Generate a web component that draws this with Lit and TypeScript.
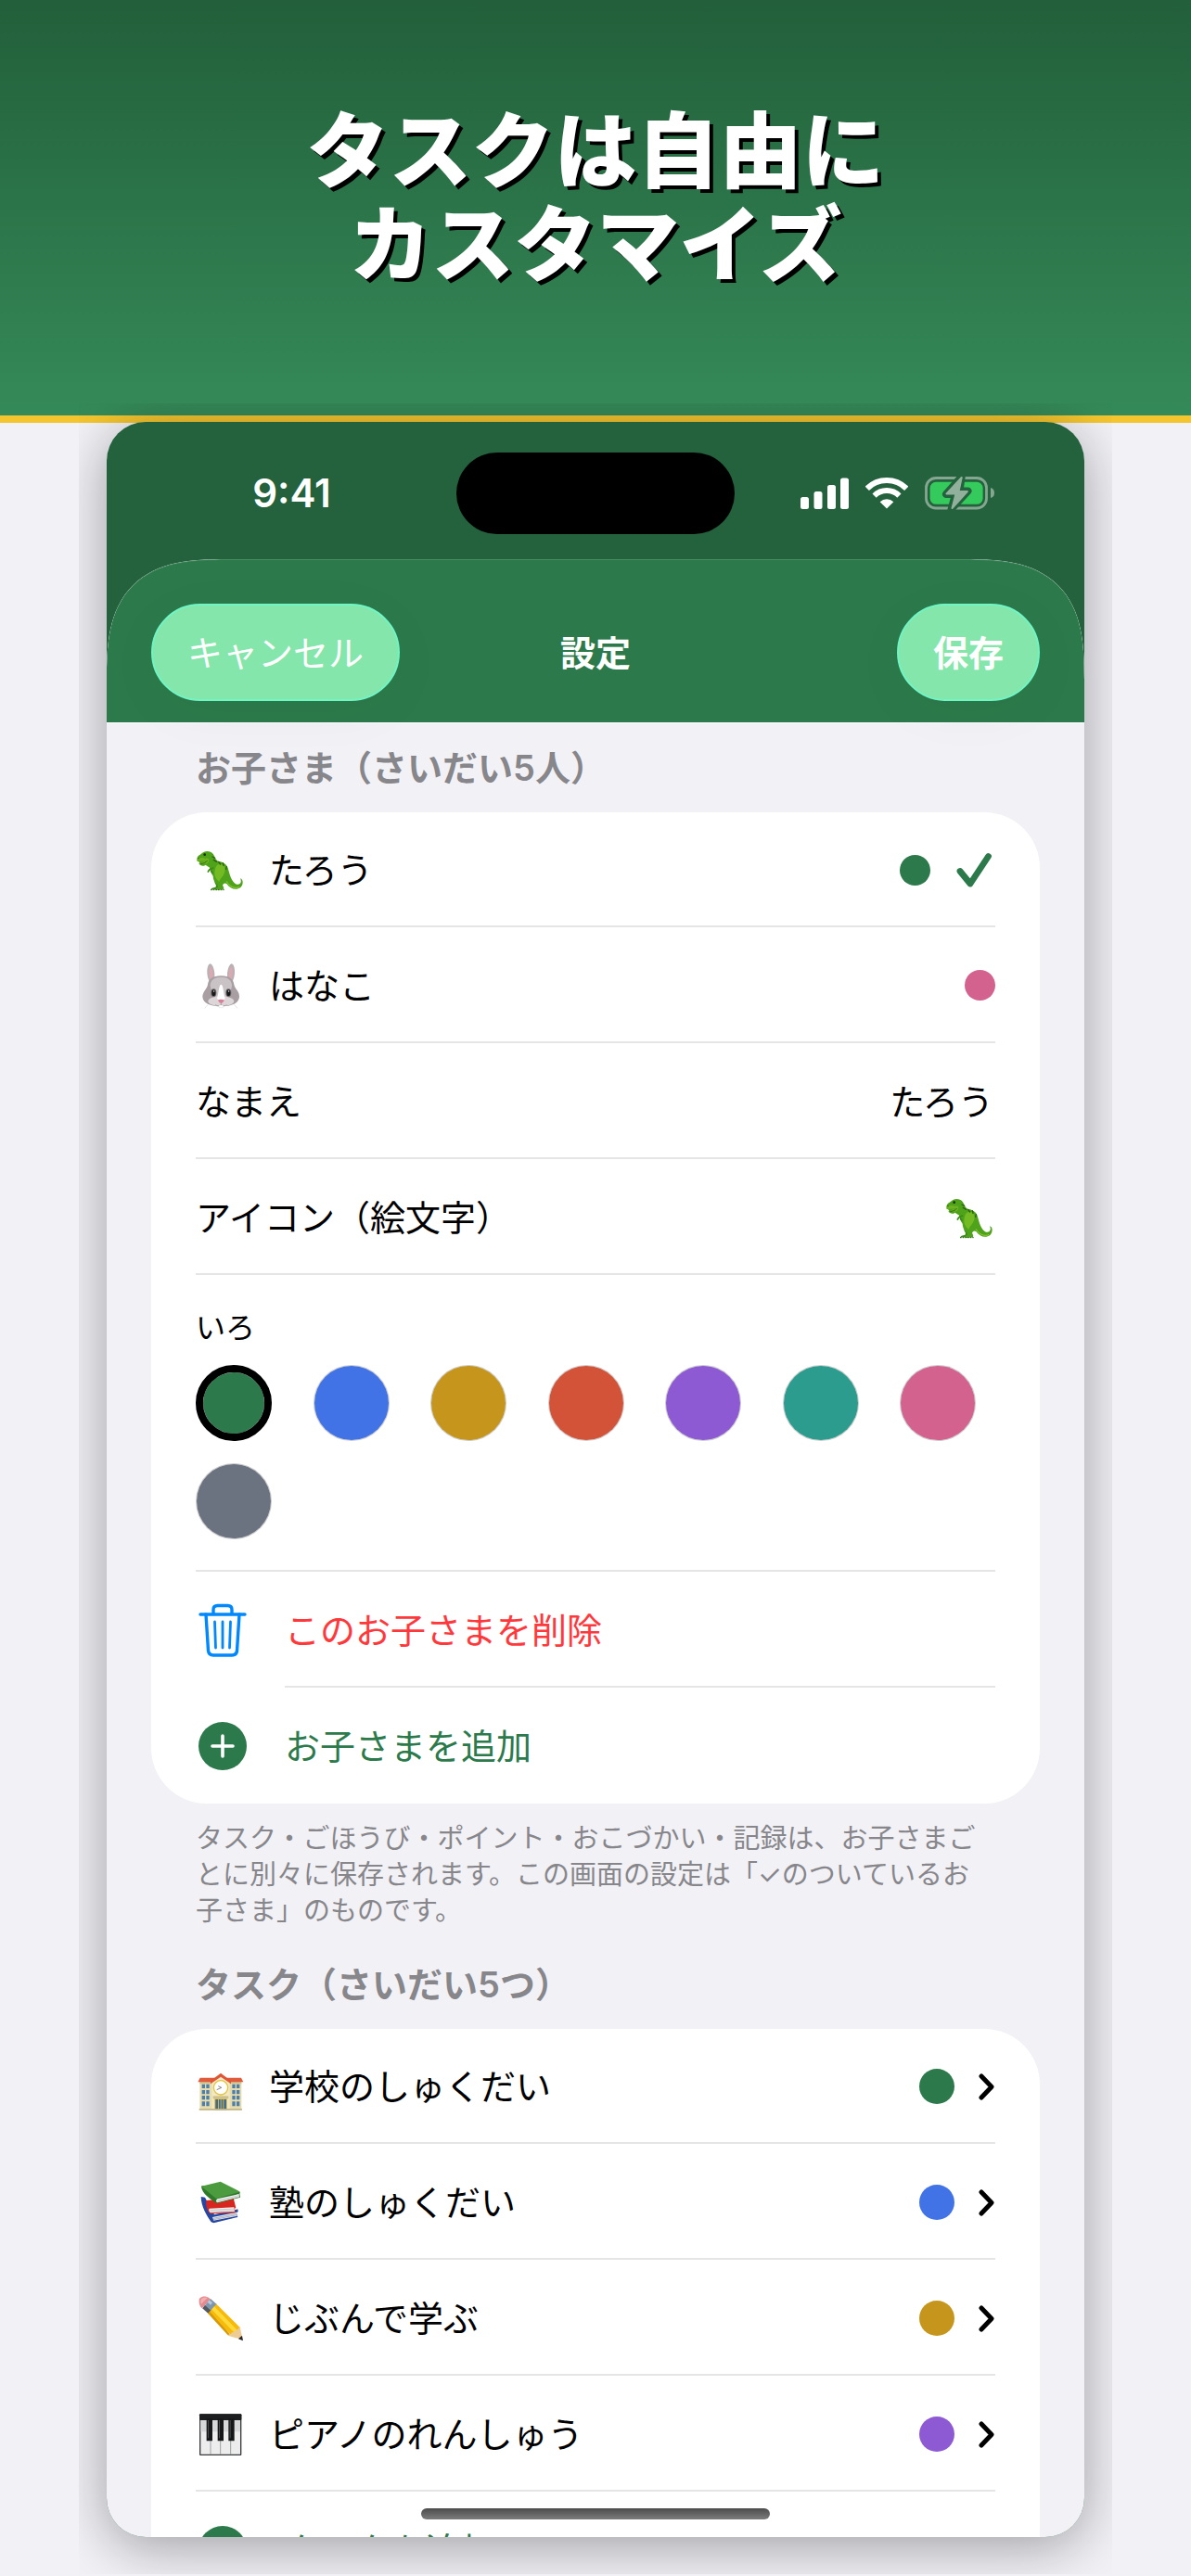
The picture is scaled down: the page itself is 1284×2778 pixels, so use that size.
import { LitElement, html, css, svg, nothing } from "lit";
import { customElement, state } from "lit/decorators.js";
import { styleMap } from "lit/directives/style-map.js";

interface Child {
  name: string;
  icon: string;
  color: string;
}

interface Task {
  name: string;
  icon: string;
  color: string;
}

const COLORS = [
  { name: "みどり", value: "#2c7a4b" },
  { name: "あお", value: "#4173e6" },
  { name: "きいろ", value: "#c6951b" },
  { name: "あか", value: "#d35339" },
  { name: "むらさき", value: "#8d5ad3" },
  { name: "あおみどり", value: "#2b9c8e" },
  { name: "ピンク", value: "#d4628e" },
  { name: "はいいろ", value: "#6b7280" },
];

const CHILDREN: Child[] = [
  { name: "たろう", icon: "dino", color: "#2c7a4b" },
  { name: "はなこ", icon: "rabbit", color: "#d4628e" },
];

const TASKS: Task[] = [
  { name: "学校のしゅくだい", icon: "school", color: "#2c7a4b" },
  { name: "塾のしゅくだい", icon: "books", color: "#4173e6" },
  { name: "じぶんで学ぶ", icon: "pencil", color: "#c6951b" },
  { name: "ピアノのれんしゅう", icon: "piano", color: "#8d5ad3" },
];

const EMOJI: Record<string, unknown> = {
  dino: svg`
    <g transform="translate(2 4)">
      <path fill="#3d8a17" d="M64 96C56 104 58 116 64 124L62 131C54 131 46 134 48 138L72 138L74 120Z"/>
      <path fill="#4fa31b" d="M2 40C3 28 12 26 18 21C24 12 46 10 55 24C61 34 62 42 70 46C86 48 97 54 102 68C108 88 113 114 130 121C142 124 148 113 142 102C152 104 153 122 143 131C130 141 110 137 98 119C92 115 88 118 85 124C88 129 90 134 88 138L66 139C60 137 66 131 70 130L68 122C58 114 54 104 54 94C48 86 44 76 42 66C34 62 34 60 29 58C24 64 12 62 8 54C14 53 9 47 3 46Z"/>
      <path fill="#74bb23" d="M68 58C84 52 96 62 92 80C88 96 78 100 74 112C64 104 56 92 60 76C61 68 64 62 68 58Z"/>
      <path fill="#6fb322" d="M3 42C8 34 20 34 30 38C38 34 44 40 40 48C34 58 22 56 12 53C16 48 28 48 34 44C24 44 12 48 3 46Z"/>
      <path fill="none" stroke="#9ccf35" stroke-width="3" stroke-linecap="round" d="M98 112C108 130 126 136 138 130"/>
      <path fill="none" stroke="#2c5f12" stroke-width="4" stroke-linecap="round" d="M52 32L60 36M56 42L66 48M72 48L78 56M86 52L88 60M98 64L96 72"/>
      <path fill="none" stroke="#3d8a17" stroke-width="5" stroke-linecap="round" d="M54 68L42 74L38 80M48 78L52 84"/>
      <circle cx="27" cy="25" r="4" fill="#16300a"/>
      <circle cx="7" cy="37" r="2" fill="#2c5f12"/>
      <path fill="none" stroke="#2f6f12" stroke-width="3" d="M14 54C22 54 30 52 36 44"/>
      <path fill="none" stroke="#2b5a12" stroke-width="3" stroke-dasharray="5 3" d="M46 139H90"/>
    </g>`,
  rabbit: svg`
    <g transform="translate(5 4)">
      <ellipse cx="44" cy="34" rx="12" ry="31" fill="#b9b1b4" transform="rotate(-5 44 34)"/>
      <ellipse cx="109" cy="34" rx="12" ry="31" fill="#b9b1b4" transform="rotate(5 109 34)"/>
      <ellipse cx="45" cy="37" rx="6" ry="24" fill="#dba9b2" transform="rotate(-5 45 37)"/>
      <ellipse cx="108" cy="37" rx="6" ry="24" fill="#dba9b2" transform="rotate(5 108 37)"/>
      <path fill="#a79fa2" d="M77 42C105 42 117 54 119 70C121 84 137 92 136 110C135 132 108 141 77 141C46 141 18 132 17 110C17 92 32 84 34 70C36 54 49 42 77 42Z"/>
      <path fill="#c9c3c5" d="M77 46C98 46 111 56 112 72C112 86 100 118 77 118C54 118 42 86 42 72C43 56 56 46 77 46Z"/>
      <ellipse cx="77" cy="124" rx="42" ry="16" fill="#dcd6d8"/>
      <path fill="#fff" d="M77 70C85 72 84 98 90 114C88 124 66 124 64 114C70 98 69 72 77 70Z"/>
      <ellipse cx="53" cy="97" rx="9" ry="13" fill="#6f686b"/>
      <ellipse cx="101" cy="97" rx="9" ry="13" fill="#6f686b"/>
      <ellipse cx="53" cy="97" rx="6" ry="10" fill="#17181a"/>
      <ellipse cx="101" cy="97" rx="6" ry="10" fill="#17181a"/>
      <circle cx="54" cy="92" r="2" fill="#fff"/>
      <circle cx="102" cy="92" r="2" fill="#fff"/>
      <path fill="#d9809a" d="M67 121C71 117 83 117 87 121C85 127 80 130 77 131C74 130 69 127 67 121Z"/>
      <path fill="none" stroke="#9b8f92" stroke-width="2" d="M77 130V136M58 136C66 141 74 139 77 135C80 139 88 141 96 136"/>
      <rect x="70" y="137" width="14" height="8" rx="2" fill="#fff" stroke="#cfcacc"/>
      <path fill="none" stroke="#d8d4d5" stroke-width="2" d="M34 136L24 147M120 136L130 147"/>
    </g>`,
  school: svg`
    <rect x="13" y="62" width="135" height="92" fill="#e6dcae"/>
    <path fill="#d3c68f" d="M13 62H148V70H13Z"/>
    <path fill="#e05a3c" d="M14 50H147L154 64H7Z"/>
    <path fill="#f2e9c4" d="M52 154V60L81 42L110 60V154Z"/>
    <path fill="#df5636" d="M81 35L114 60V70L81 47L48 70V60Z"/>
    <circle cx="81" cy="82" r="23" fill="#fff" stroke="#e2c53c" stroke-width="4"/>
    <path fill="none" stroke="#444" stroke-width="2" d="M68 89L83 82L73 77"/>
    <g fill="#4e7ea8">
      <path d="M20 71h10v13h-10zM34 71h10v13h-10zM20 90h10v13h-10zM34 90h10v13h-10zM20 108h10v13h-10zM34 108h10v13h-10zM20 127h10v15h-10zM34 127h10v15h-10z"/>
      <path d="M118 71h10v13h-10zM132 71h10v13h-10zM118 90h10v13h-10zM132 90h10v13h-10zM118 108h10v13h-10zM132 108h10v13h-10zM118 127h10v15h-10zM132 127h10v15h-10z"/>
    </g>
    <rect x="56" y="109" width="50" height="9" fill="#cfc18c"/>
    <rect x="61" y="118" width="40" height="36" fill="#d7b23a"/>
    <path fill="#3f6d94" d="M64 120h8v34h-8zM75 120h5v34h-5zM83 120h5v34h-5zM91 120h8v34h-8z"/>
    <path fill="#c2b689" d="M11 150H150V155H11Z"/>`,
  books: svg`
    <path fill="#2746a0" d="M17 60L30 62L60 118L136 100L137 108L132 112L136 126L58 145L50 142C34 118 18 92 17 60Z"/>
    <path fill="#e9ecf2" d="M54 126L132 110L134 122L58 137Z"/>
    <path fill="none" stroke="#8f96a6" stroke-width="2" d="M56 130L132 115M57 134L133 119"/>
    <path fill="#d8261f" d="M34 72L122 64L130 96L126 98L128 112L46 115C36 104 32 88 34 72Z"/>
    <path fill="#f1f1f1" d="M44 98L124 94L126 108L48 112C42 108 41 101 44 98Z"/>
    <path fill="none" stroke="#b5b5b5" stroke-width="2" d="M46 103L124 99M47 108L125 104"/>
    <path fill="#2d7a2a" d="M18 26L24 24L144 46L142 50L144 62L68 82C48 66 20 52 18 26Z"/>
    <path fill="#4c9c3f" d="M18 26L80 11L144 44L66 66Z"/>
    <path fill="#f4f4f4" d="M70 67L140 51L141 61L70 79C65 77 65 70 70 67Z"/>
    <path fill="none" stroke="#b9b9b9" stroke-width="2" d="M70 72L140 56M70 76L140 60"/>`,
  pencil: svg`
    <path fill="#e58a8e" d="M11 20C10 12 24 5 36 9C42 11 46 14 48 17L20 46C14 40 10 32 11 20Z"/>
    <path fill="#f2aeb0" d="M16 20C18 12 30 9 38 12L18 32C15 28 15 24 16 20Z"/>
    <path fill="#7f97ad" d="M48 15L69 34L42 64L22 46Z"/>
    <path fill="#55585e" d="M30 36L22 46L42 64L50 54Z"/>
    <path fill="#b5cbdc" d="M44 19L54 28L48 35L38 26Z"/>
    <path fill="#f7b90a" d="M67 32L145 110L120 138L40 62Z"/>
    <path fill="#ffd937" d="M60 40L134 116L126 126L52 50Z"/>
    <path fill="#d69a08" d="M46 57L40 63L104 133L112 132Z"/>
    <path fill="#edcb95" d="M143 106L152 148L104 134C110 128 114 132 116 124C124 126 124 118 130 116C136 118 138 110 143 106Z"/>
    <path fill="#26272b" d="M150 135L153 151L138 145C142 141 146 137 150 135Z"/>`,
  piano: svg`
    <rect x="12" y="13" width="136" height="134" rx="3" fill="#3a3b3d"/>
    <path fill="#ededee" d="M16 33H144V143H16Z"/>
    <path fill="#d7d8da" d="M16 33H144V70H16Z"/>
    <path stroke="#77787b" stroke-width="2" d="M48 33V143M80 33V143M113 33V143"/>
    <rect x="12" y="13" width="136" height="20" rx="3" fill="#1c1e20"/>
    <path fill="#161718" d="M35 28h19v72h-19zM71 28h19v72h-19zM106 28h19v72h-19z"/>
    <path fill="#4a4c4f" d="M39 33h3v58h-3zM75 33h3v58h-3zM110 33h3v58h-3z"/>`,
};

const emoji = (name: string) => html`
  <svg class="emoji" viewBox="0 0 156 156" aria-hidden="true">${EMOJI[name]}</svg>
`;

const dot = (color: string, large = false) => html`
  <span class=${large ? "dot dot-large" : "dot"} style=${styleMap({ background: color })}></span>
`;

const plusIcon = html`
  <svg class="lead-icon" viewBox="0 0 58 58" aria-hidden="true">
    <circle cx="29" cy="29" r="26" fill="#2c7a4b" />
    <path d="M29 18V40M18 29H40" stroke="#fff" stroke-width="3.6" stroke-linecap="round" />
  </svg>
`;

const trashIcon = html`
  <svg class="lead-icon" viewBox="0 0 58 58" aria-hidden="true">
    <g fill="none" stroke="#0088ff" stroke-width="3.4" stroke-linecap="round" stroke-linejoin="round">
      <path d="M5 12H53M19 12V7Q19 2.500 23.500 2.500H34.500Q39 2.500 39 7V12" />
      <path d="M11 12L13.500 51Q14 56 19 56H39Q44 56 44.500 51L47 12" />
      <path stroke-width="2.800" d="M20.500 20L21.500 48M29 20V48M37.500 20L36.500 48" />
    </g>
  </svg>
`;

@customElement("app-root")
export class AppRoot extends LitElement {
  @state() private selectedChild = 0;
  @state() private selectedColor = COLORS[0].value;

  static styles = css`
    :host {
      display: block;
      font-family: Inter, "Noto Sans CJK JP", sans-serif;
      font-size: 38px;
      line-height: 48px;
      color: #000;
    }
    * {
      box-sizing: border-box;
    }
    button,
    input {
      margin: 0;
      padding: 0;
      border: 0;
      background: none;
      font: inherit;
      color: inherit;
    }
    .page {
      display: flex;
      flex-direction: column;
      height: 100vh;
      overflow: hidden;
      background: #f2f1f6;
    }
    .banner {
      flex: none;
      padding: 112px 24px 134px;
      border-bottom: 8px solid #f4c52f;
      background: linear-gradient(#225f3a, #358a59);
    }
    .headline {
      margin: 0;
      font-size: 89px;
      line-height: 101px;
      font-weight: 900;
      text-align: center;
      color: #fff;
      text-shadow: 4px 4px 0 #000;
    }
    .stage {
      flex: 1;
      min-height: 0;
      display: flex;
      margin: -1px 115px 42px;
      border-radius: 42px;
      box-shadow: 0 10px 60px rgba(0, 0, 0, 0.35);
      clip-path: inset(-20px -30px -40px);
    }
    .phone {
      position: relative;
      flex: 1;
      min-width: 0;
      display: flex;
      flex-direction: column;
      border-radius: 42px;
      overflow: hidden;
      background: #23623c;
    }
    .status {
      flex: none;
      display: grid;
      grid-template-columns: 1fr 300px 1fr;
      align-items: center;
      padding: 33px 0 27px;
      color: #fff;
    }
    .time {
      padding-left: 22px;
      font-size: 42px;
      font-weight: 600;
      text-align: center;
    }
    .island {
      height: 88px;
      border-radius: 44px;
      background: #000;
    }
    .indicators {
      display: flex;
      align-items: center;
      justify-content: center;
      gap: 18px;
      padding-right: 26px;
    }
    .signal {
      width: 52px;
      height: 34px;
    }
    .wifi {
      width: 46px;
      height: 34px;
    }
    .battery {
      width: 76px;
      height: 36px;
    }
    .sheet {
      flex: 1;
      min-height: 0;
      display: flex;
      flex-direction: column;
      border-radius: 96px 96px 0 0;
      background: #f2f1f6;
      overflow: hidden;
    }
    .nav {
      flex: none;
      display: grid;
      grid-template-columns: 1fr auto 1fr;
      align-items: center;
      padding: 48px 48px 23px;
      border-bottom: 1px solid #fff;
      border-radius: 96px 96px 0 0;
      background: #2c7a4b;
      box-shadow: inset 0 1px 0 rgba(255, 255, 255, 0.12);
      color: #fff;
    }
    @supports (corner-shape: superellipse(1.5)) {
      .sheet,
      .nav {
        border-radius: 130px 130px 0 0;
        corner-shape: superellipse(1.5);
      }
    }
    .pill {
      justify-self: start;
      height: 105px;
      padding: 0 37px;
      border: 2px solid #70f5c4;
      border-radius: 53px;
      background: #84e6ab;
      box-shadow: 0 12px 60px rgba(0, 0, 0, 0.04);
    }
    .pill-save {
      justify-self: end;
      font-weight: 700;
    }
    .title {
      margin: 0;
      font-size: 38px;
      font-weight: 700;
    }
    .content {
      flex: 1;
      min-height: 0;
      overflow: hidden;
      padding: 0 48px;
    }
    .section-title {
      margin: 0;
      padding: 25px 48px 24px;
      font-size: 38px;
      line-height: 47px;
      font-weight: 600;
      color: #86868b;
    }
    .card {
      padding: 0 48px;
      border-radius: 60px;
      background: #fff;
    }
    .row {
      display: flex;
      align-items: center;
      width: 100%;
      height: 125px;
      padding-top: 2px;
      border-bottom: 2px solid #e5e5e6;
      text-align: left;
    }
    .card > .row:first-child {
      height: 124px;
    }
    .row-last {
      border-bottom-color: transparent;
    }
    .label {
      flex: 1;
      white-space: nowrap;
    }
    .emoji {
      flex: none;
      width: 52px;
      height: 52px;
      margin-right: 27px;
    }
    .trailing {
      display: flex;
      align-items: center;
      gap: 26px;
    }
    .icon-field .emoji {
      margin-right: 2px;
    }
    .dot {
      width: 33px;
      height: 33px;
      border-radius: 50%;
    }
    .dot-large {
      width: 38px;
      height: 38px;
    }
    .check {
      width: 44px;
      height: 40px;
    }
    .chevron {
      width: 18px;
      height: 30px;
    }
    .field {
      flex: 1;
      min-width: 0;
      padding-right: 2px;
      text-align: right;
      outline: none;
    }
    .icon-field {
      display: flex;
    }
    .palette {
      margin: 0;
      padding: 33px 0;
      border: 0;
      border-bottom: 2px solid #e5e5e6;
    }
    .palette-title {
      font-size: 32px;
      line-height: 48px;
    }
    .swatches {
      display: grid;
      grid-template-columns: repeat(7, 1fr);
      gap: 24px;
      padding-top: 16px;
    }
    .swatch {
      appearance: none;
      display: block;
      width: 82px;
      height: 82px;
      border: 1px solid rgba(0, 0, 0, 0.2);
      border-radius: 50%;
      background-clip: padding-box;
    }
    .swatch:checked {
      border: 8px solid #000;
    }
    .action {
      display: flex;
      align-items: center;
      gap: 38px;
      width: 100%;
      text-align: left;
    }
    .lead-icon {
      flex: none;
      width: 58px;
      height: 58px;
    }
    .action .row {
      flex: 1;
    }
    .danger {
      color: #ff383c;
    }
    .accent {
      color: #2c7a4b;
    }
    .note {
      margin: 0;
      padding: 18px 48px 12px;
      font-size: 29px;
      line-height: 39px;
      color: #86868b;
    }
    .home-bar {
      position: absolute;
      left: 50%;
      bottom: 19px;
      width: 376px;
      height: 12px;
      margin-left: -188px;
      border-radius: 6px;
      background: linear-gradient(#4c4c4c, #7c7c7c);
    }
  `;

  private renderStatus() {
    return html`
      <div class="status">
        <div class="time">9:41</div>
        <div class="island"></div>
        <div class="indicators">
          <svg class="signal" viewBox="0 0 52 34" fill="#fff" aria-hidden="true">
            <rect x="0" y="21" width="9" height="13" rx="2.500" />
            <rect x="14.500" y="15" width="9" height="19" rx="2.500" />
            <rect x="29" y="8" width="9" height="26" rx="2.500" />
            <rect x="43" y="0.500" width="9" height="33.500" rx="2.500" />
          </svg>
          <svg class="wifi" viewBox="0 0 46 34" aria-hidden="true">
            <path d="M1.800 11.800A30 30 0 0 1 44.200 11.800" fill="none" stroke="#fff" stroke-width="6" />
            <path d="M9.600 19.600A19 19 0 0 1 36.400 19.600" fill="none" stroke="#fff" stroke-width="6" />
            <path d="M23 33.500L15.700 26.200A10.300 10.300 0 0 1 30.300 26.200Z" fill="#fff" />
          </svg>
          <svg class="battery" viewBox="0 0 76 36" aria-hidden="true">
            <rect x="1.500" y="1.500" width="65" height="32.500" rx="10.500" fill="none" stroke="#85a791" stroke-width="2.800" />
            <rect x="5.600" y="5.800" width="57" height="24" rx="6.500" fill="#35cb5c" />
            <path d="M71 12Q75 13 75 17.500Q75 22 71 23Z" fill="#85a791" />
            <path d="M39.700 0L23 19H33L28.600 35L46.500 15.500H37.500Z" fill="#23623c" stroke="#23623c" stroke-width="8" stroke-linejoin="round" />
            <path d="M39.700 1L23.500 18.500H33.500L29.500 34L45.800 16H36.500Z" fill="#92b19d" stroke="#92b19d" stroke-width="2" stroke-linejoin="round" />
          </svg>
        </div>
      </div>
    `;
  }

  private renderChild(child: Child, index: number) {
    const selected = index === this.selectedChild;
    return html`
      <button class="row" aria-pressed=${selected} @click=${() => (this.selectedChild = index)}>
        ${emoji(child.icon)}
        <span class="label">${child.name}</span>
        <span class="trailing">
          ${dot(child.color)}
          ${selected
            ? html`<svg class="check" viewBox="0 0 44 40" aria-hidden="true">
                <path d="M6 21.500L17 35L36.500 5.500" fill="none" stroke="#2c7a4b" stroke-width="6.800" stroke-linecap="round" stroke-linejoin="round" />
              </svg>`
            : nothing}
        </span>
      </button>
    `;
  }

  private renderTask(task: Task) {
    return html`
      <button class="row">
        ${emoji(task.icon)}
        <span class="label">${task.name}</span>
        <span class="trailing">
          ${dot(task.color, true)}
          <svg class="chevron" viewBox="0 0 18 30" aria-hidden="true">
            <path d="M3 4L14 15.500L3 27" fill="none" stroke="#000" stroke-width="5" stroke-linecap="round" stroke-linejoin="round" />
          </svg>
        </span>
      </button>
    `;
  }

  private renderPalette() {
    return html`
      <div class="palette" role="radiogroup" aria-labelledby="palette-title">
        <div class="palette-title" id="palette-title">いろ</div>
        <div class="swatches">
          ${COLORS.map(
            (c) => html`<input
              class="swatch"
              type="radio"
              name="color"
              aria-label=${c.name}
              style=${styleMap({ backgroundColor: c.value })}
              .checked=${c.value === this.selectedColor}
              @change=${() => (this.selectedColor = c.value)}
            />`
          )}
        </div>
      </div>
    `;
  }

  render() {
    return html`
      <div class="page">
        <header class="banner">
          <h1 class="headline">タスクは自由に<br />カスタマイズ</h1>
        </header>
        <div class="stage">
          <main class="phone">
            ${this.renderStatus()}
            <div class="sheet">
              <nav class="nav">
                <button class="pill">キャンセル</button>
                <h2 class="title">設定</h2>
                <button class="pill pill-save">保存</button>
              </nav>
              <div class="content">
                <h3 class="section-title">お子さま（さいだい5人）</h3>
                <section class="card">
                  ${CHILDREN.map((c, i) => this.renderChild(c, i))}
                  <div class="row">
                    <label for="child-name">なまえ</label>
                    <input class="field" id="child-name" type="text" .value=${CHILDREN[this.selectedChild].name} />
                  </div>
                  <div class="row">
                    <span class="label" id="icon-label">アイコン（絵文字）</span>
                    <button class="icon-field" aria-labelledby="icon-label">
                      ${emoji(CHILDREN[this.selectedChild].icon)}
                    </button>
                  </div>
                  ${this.renderPalette()}
                  <button class="action danger">
                    ${trashIcon}<span class="row">このお子さまを削除</span>
                  </button>
                  <button class="action accent">
                    ${plusIcon}<span class="row row-last">お子さまを追加</span>
                  </button>
                </section>
                <p class="note">
                  タスク・ごほうび・ポイント・おこづかい・記録は、お子さまごとに別々に保存されます。この画面の設定は「✓のついているお子さま」のものです。
                </p>
                <h3 class="section-title">タスク（さいだい5つ）</h3>
                <section class="card">
                  ${TASKS.map((t) => this.renderTask(t))}
                  <button class="action accent">
                    ${plusIcon}<span class="row row-last">タスクを追加</span>
                  </button>
                </section>
              </div>
            </div>
            <div class="home-bar"></div>
          </main>
        </div>
      </div>
    `;
  }
}
